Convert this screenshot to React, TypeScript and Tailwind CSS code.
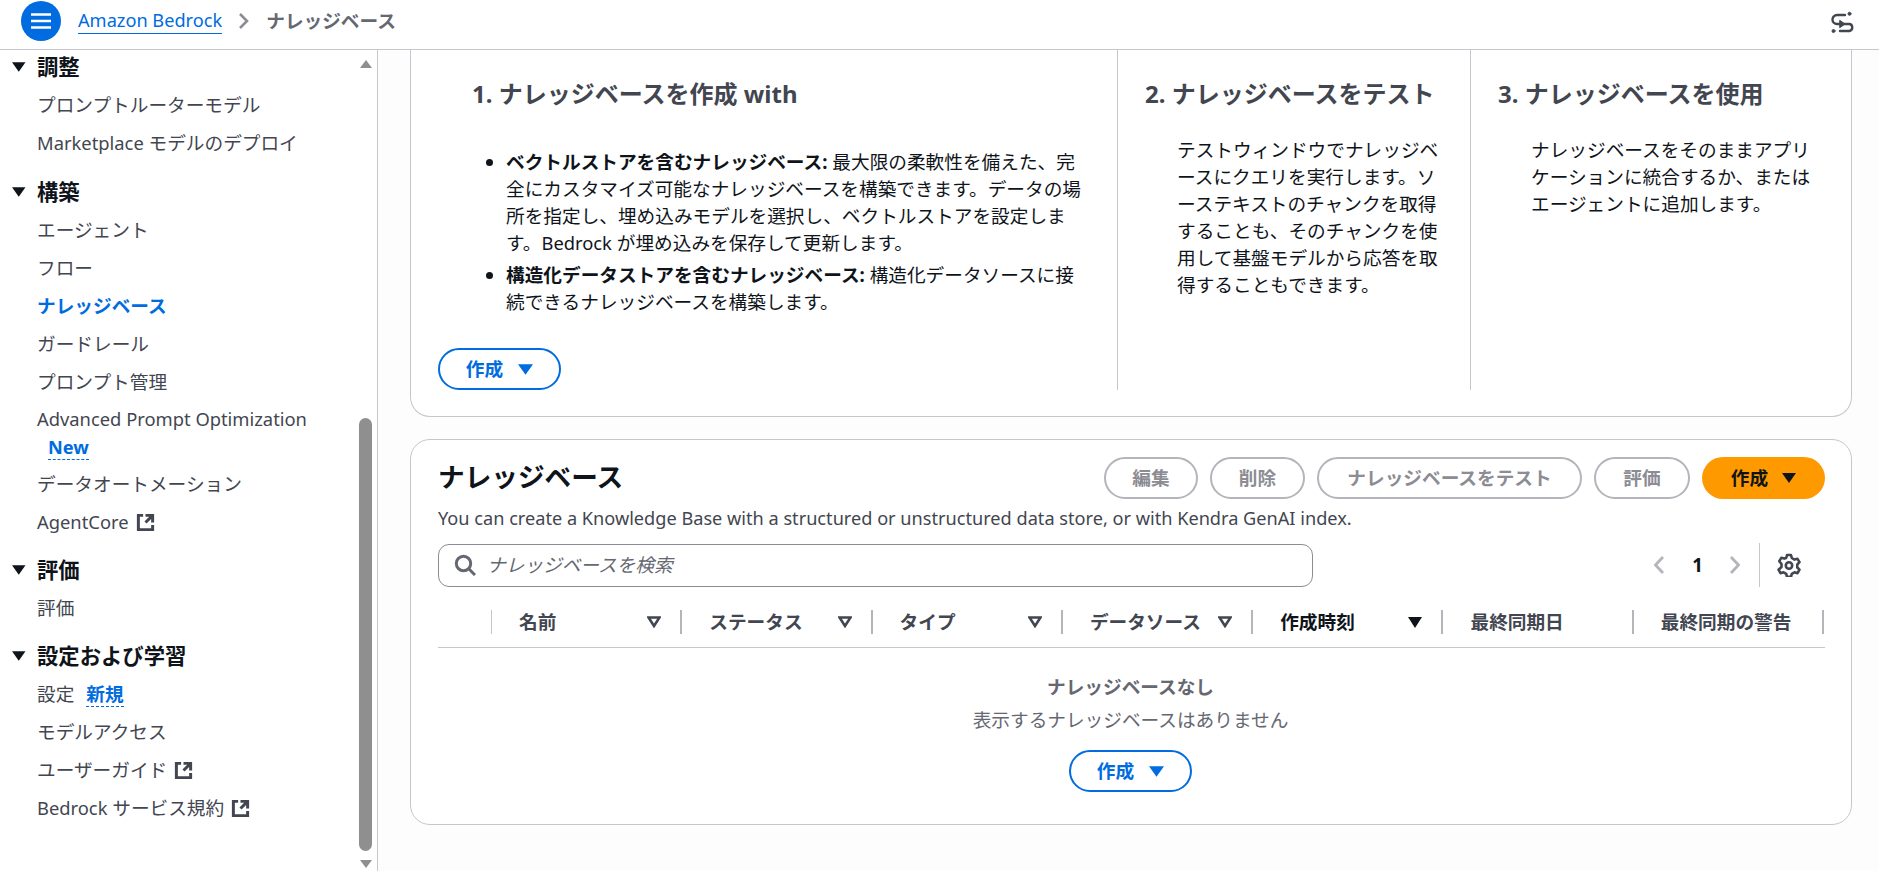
import React from "react";

const font = "font-['Noto_Sans','Noto_Sans_CJK_JP',sans-serif]";

// latin runs come out a touch smaller than the kana next to them
const Latin = ({ children }: { children: React.ReactNode }) => <span className="text-[18.35px]">{children}</span>;

const ExternalIcon = () => (
  <svg viewBox="0 0 16 16" className="ml-[7px] h-[19px] w-[19px]" fill="none" stroke="#424650" strokeWidth="2.5">
    <path d="M14 8.01v-6H8M14.02 2 8 8.01M6 2.01H2v12h12v-3.99" />
  </svg>
);

const Caret = ({ className }: { className: string }) => (
  <svg viewBox="0 0 14 10" className={className} fill="currentColor">
    <path d="M0 0h14L7 10z" />
  </svg>
);

const NavHeading = ({ label }: { label: string }) => (
  <div className="flex h-[38px] items-center text-[21.33px] font-bold text-[#0f141a]">
    <Caret className="ml-[12px] mr-[11.500px] h-[10px] w-[13.500px] text-[#0f141a]" />
    {label}
  </div>
);

const NavItem = ({ children, active }: { children: React.ReactNode; active?: boolean }) => (
  <div className={`flex h-[38px] items-center pl-[37px] text-[18.67px] ${active ? "font-bold text-[#006ce0]" : "text-[#424650]"}`}>
    {children}
  </div>
);

const NewBadge = ({ label, className }: { label: string; className: string }) => (
  <span className={`border-b border-dashed border-[#006ce0] font-bold leading-[25px] text-[#006ce0] ${className}`}>{label}</span>
);

const Sidebar = () => (
  <aside className="flex h-full w-[378px] shrink-0 border-r border-[#c6c6cd] bg-white">
    <nav className="-mt-[2px] min-w-0 flex-1">
      <section className="mb-[11px]">
        <NavHeading label="調整" />
        <NavItem>プロンプトルーターモデル</NavItem>
        <NavItem>
          <span className="whitespace-pre">
            <Latin>Marketplace </Latin>モデルのデプロイ
          </span>
        </NavItem>
      </section>
      <section className="mb-[10px]">
        <NavHeading label="構築" />
        <NavItem>エージェント</NavItem>
        <NavItem>フロー</NavItem>
        <NavItem active>ナレッジベース</NavItem>
        <NavItem>ガードレール</NavItem>
        <NavItem>プロンプト管理</NavItem>
        <div className="flex h-[64px] flex-col justify-center pl-[37px] text-[18.67px] leading-[28px] text-[#424650]">
          <div>
            <Latin>Advanced Prompt Optimization</Latin>
          </div>
          <div className="pl-[11px]">
            <NewBadge label="New" className="text-[18.2px]" />
          </div>
        </div>
        <NavItem>データオートメーション</NavItem>
        <NavItem>
          <Latin>AgentCore</Latin>
          <ExternalIcon />
        </NavItem>
      </section>
      <section className="mb-[10px]">
        <NavHeading label="評価" />
        <NavItem>評価</NavItem>
      </section>
      <section>
        <NavHeading label="設定および学習" />
        <NavItem>
          設定
          <NewBadge label="新規" className="ml-[12px]" />
        </NavItem>
        <NavItem>モデルアクセス</NavItem>
        <NavItem>
          ユーザーガイド
          <ExternalIcon />
        </NavItem>
        <NavItem>
          <span className="whitespace-pre">
            <Latin>Bedrock </Latin>サービス規約
          </span>
          <ExternalIcon />
        </NavItem>
      </section>
    </nav>
    <div className="flex w-[18px] shrink-0 flex-col items-start">
      <svg viewBox="0 0 12 8" className="mt-[10px] ml-[1px] h-[8px] w-[12px]" fill="#8f8f8f">
        <path d="M6 0l6 8H0z" />
      </svg>
      <div className="mt-[350px] h-[433px] w-[13px] rounded-full bg-[#8f8f8f]" />
      <svg viewBox="0 0 12 8" className="mt-[9px] ml-[1px] h-[8px] w-[12px]" fill="#8f8f8f">
        <path d="M0 0h12L6 8z" />
      </svg>
    </div>
  </aside>
);

const TopBar = () => (
  <header className="flex h-[50px] shrink-0 items-center border-b border-[#c6c6cd] bg-white pb-[8px] pl-[21px] pr-[23px]">
    <div className="flex h-[40px] w-[40px] items-center justify-center rounded-full bg-[#006ce0]">
      <svg viewBox="0 0 20 16" className="h-[16px] w-[20px]" fill="none" stroke="white" strokeWidth="2.6">
        <path d="M0 1.500h20M0 8h20M0 14.500h20" />
      </svg>
    </div>
    <a className="ml-[17px] border-b border-[#006ce0] text-[18.2px] leading-[25px] text-[#006ce0]">Amazon Bedrock</a>
    <svg viewBox="0 0 10 16" className="ml-[17px] mr-[17px] h-[16px] w-[10px]" fill="none" stroke="#8c8c94" strokeWidth="2.6">
      <path d="M1 1l7 7-7 7" />
    </svg>
    <span className="text-[18.67px] font-bold text-[#656871]">ナレッジベース</span>
    <svg viewBox="0 0 26 23" className="ml-auto mt-[4px] h-[23px] w-[26px]" fill="none" stroke="#424650" strokeWidth="2.4" strokeLinecap="round">
      <path d="M15 4H7a4.500 4.500 0 0 0 0 9h12.500a3.600 3.600 0 0 1 0 7H10" />
      <path d="M10 9.500l5 3.500-5 3.500z" fill="#424650" strokeWidth="1" strokeLinejoin="round" />
      <circle cx="19.500" cy="2.800" r="1.500" fill="#424650" strokeWidth="1" />
      <circle cx="3.500" cy="20" r="1.500" fill="#424650" strokeWidth="1" />
    </svg>
  </header>
);

const OutlineButton = ({ label, className }: { label: string; className?: string }) => (
  <button className={`flex h-[42px] w-[123px] items-center justify-center gap-[15px] rounded-full border-[2.67px] border-[#006ce0] bg-white text-[18.67px] font-bold text-[#006ce0] ${className ?? ""}`}>
    {label}
    <Caret className="h-[11px] w-[15px]" />
  </button>
);

const DisabledButton = ({ label, width }: { label: string; width: string }) => (
  <button className={`flex h-[42px] items-center justify-center rounded-full border-[2.67px] border-[#b4b4bb] text-[18.67px] font-bold text-[#8c8c94] ${width}`}>
    {label}
  </button>
);

const HowItWorks = () => (
  <div className="flex h-[367px] shrink-0 rounded-b-[20px] border border-t-0 border-[#c6c6cd] bg-white">
    <div className="flex h-[340px] w-[707px] shrink-0 flex-col border-r border-[#c6c6cd] pl-[27px]">
      <h2 className="ml-[34px] mt-[27px] text-[24px] font-bold leading-[34px] text-[#424650]">1. ナレッジベースを作成 with</h2>
      <ul className="ml-[68px] mr-[25px] mt-[37px] list-disc text-[18.67px] leading-[27px] text-[#0f141a]">
        <li className="mb-[5px]">
          <strong>ベクトルストアを含むナレッジベース:</strong> 最大限の柔軟性を備えた、完全にカスタマイズ可能なナレッジベースを構築できます。データの場所を指定し、埋め込みモデルを選択し、ベクトルストアを設定します。<Latin>Bedrock</Latin> が埋め込みを保存して更新します。
        </li>
        <li>
          <strong>構造化データストアを含むナレッジベース:</strong> 構造化データソースに接続できるナレッジベースを構築します。
        </li>
      </ul>
      <OutlineButton label="作成" className="mt-auto" />
    </div>
    <div className="h-[340px] w-[353px] shrink-0 border-r border-[#c6c6cd] pl-[27px]">
      <h2 className="mt-[27px] text-[24px] font-bold leading-[34px] text-[#424650]">2. ナレッジベースをテスト</h2>
      <p className="ml-[32px] mr-[26px] mt-[25px] text-[18.67px] leading-[27px] text-[#0f141a]">
        テストウィンドウでナレッジベースにクエリを実行します。ソーステキストのチャンクを取得することも、そのチャンクを使用して基盤モデルから応答を取得することもできます。
      </p>
    </div>
    <div className="min-w-0 flex-1 pl-[27px]">
      <h2 className="mt-[27px] text-[24px] font-bold leading-[34px] text-[#424650]">3. ナレッジベースを使用</h2>
      <p className="ml-[33px] mr-[30px] mt-[25px] text-[18.67px] leading-[27px] text-[#0f141a]">
        ナレッジベースをそのままアプリケーションに統合するか、またはエージェントに追加します。
      </p>
    </div>
  </div>
);

const columns = [
  { label: "名前", sort: "outline" },
  { label: "ステータス", sort: "outline" },
  { label: "タイプ", sort: "outline" },
  { label: "データソース", sort: "outline" },
  { label: "作成時刻", sort: "solid" },
  { label: "最終同期日" },
  { label: "最終同期の警告" },
];

const SortIcon = ({ kind }: { kind: string }) => (
  <svg viewBox="0 0 14 12" className="absolute right-[19px] top-1/2 h-[12px] w-[14px] -translate-y-1/2">
    {kind === "solid" ? (
      <path d="M0 1h14L7 12z" fill="#0f141a" />
    ) : (
      <path d="M1.500 1.500h11L7 10z" fill="none" stroke="#424650" strokeWidth="2.6" />
    )}
  </svg>
);

const TableHeader = () => (
  <div className="flex h-[61px] border-b border-[#c6c6cd] pb-[13px] pt-[23px]">
    <div className="h-full w-[54px] shrink-0 border-r border-[#c6c6cd]" />
    {columns.map((c) => (
      <div
        key={c.label}
        className={`relative flex h-full w-[190.3px] shrink-0 items-center border-r-2 border-[#b4b4bb] pl-[27px] text-[18.67px] font-bold ${c.sort === "solid" ? "text-[#0f141a]" : "text-[#424650]"}`}
      >
        {c.label}
        {c.sort && <SortIcon kind={c.sort} />}
      </div>
    ))}
  </div>
);

const KnowledgeBases = () => (
  <div className="mt-[22px] flex h-[386px] shrink-0 flex-col rounded-[20px] border border-[#c6c6cd] bg-white pl-[27px] pr-[26px] pt-[17px]">
    <div className="flex items-center justify-between">
      <h1 className="-mt-[2px] text-[26.67px] font-bold leading-[42px] text-[#0f141a]">ナレッジベース</h1>
      <div className="flex gap-[12px]">
        <DisabledButton label="編集" width="w-[94px]" />
        <DisabledButton label="削除" width="w-[95px]" />
        <DisabledButton label="ナレッジベースをテスト" width="w-[265px]" />
        <DisabledButton label="評価" width="w-[96px]" />
        <button className="flex h-[42px] w-[123px] items-center justify-center gap-[14px] rounded-full bg-[#ff9900] text-[18.67px] font-bold text-[#0f141a]">
          作成
          <Caret className="h-[10px] w-[14px]" />
        </button>
      </div>
    </div>
    <p className="mt-[5px] text-[18.17px] leading-[28px] text-[#424650]">
      You can create a Knowledge Base with a structured or unstructured data store, or with Kendra GenAI index.
    </p>
    <div className="mt-[11px] flex items-center">
      <div className="flex h-[43px] w-[875px] items-center rounded-[11px] border-[1.5px] border-[#8c8c94] pl-[15px]">
        <svg viewBox="0 0 22 22" className="h-[22px] w-[22px]" fill="none" stroke="#656871" strokeWidth="3">
          <circle cx="9.500" cy="9.500" r="7.200" />
          <path d="M14.500 14.500L21 21" />
        </svg>
        <span className="ml-[11px] text-[18.67px] italic text-[#656871]">ナレッジベースを検索</span>
      </div>
      <div className="ml-auto flex h-[44px] items-center">
        <svg viewBox="0 0 10 18" className="h-[18px] w-[10px]" fill="none" stroke="#b4b4bb" strokeWidth="2.8">
          <path d="M9 1L1.500 9 9 17" />
        </svg>
        <span className="ml-[28px] text-[18.67px] font-bold text-[#0f141a]">1</span>
        <svg viewBox="0 0 10 18" className="ml-[27px] h-[18px] w-[10px]" fill="none" stroke="#b4b4bb" strokeWidth="2.8">
          <path d="M1 1l7.500 8L1 17" />
        </svg>
        <div className="ml-[19px] h-full w-px bg-[#c6c6cd]" />
        <svg viewBox="0 0 24 24" className="ml-[17px] mr-[24px] h-[24px] w-[24px]" fill="none" stroke="#424650" strokeWidth="2.6" strokeLinejoin="round">
          <path d="M10 2h4l.8 3 2.700 1.600 3-.8 2 3.400-2.200 2.300v3l2.200 2.200-2 3.500-3-.9-2.700 1.600-.8 3h-4l-.8-3-2.700-1.600-3 .9-2-3.500L4.500 14v-3L2.300 8.200l2-3.400 3 .8L9.200 5z" />
          <circle cx="12" cy="12.500" r="3.200" />
        </svg>
      </div>
    </div>
    <TableHeader />
    <div className="flex flex-col items-center pr-[2px] pt-[25px]">
      <div className="text-[18.67px] font-bold leading-[27px] text-[#656871]">ナレッジベースなし</div>
      <div className="mt-[6px] text-[18.67px] leading-[27px] text-[#656871]">表示するナレッジベースはありません</div>
      <OutlineButton label="作成" className="mt-[17px]" />
    </div>
  </div>
);

export default function App() {
  return (
    <div className={`flex h-[871px] w-[1879px] flex-col overflow-hidden bg-[#fdfdfd] ${font}`}>
      <TopBar />
      <div className="flex min-h-0 flex-1">
        <Sidebar />
        <main className="flex min-w-0 flex-1 flex-col pl-[32px] pr-[27px]">
          <HowItWorks />
          <KnowledgeBases />
        </main>
      </div>
    </div>
  );
}
